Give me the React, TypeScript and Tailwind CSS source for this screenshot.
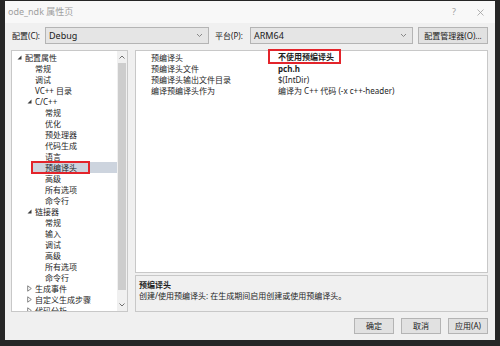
import React from 'react';

type Node = { label: string; level: number; toggle?: 'open' | 'closed'; selected?: boolean };

const tree: Node[] = [
  { label: '配置属性', level: 0, toggle: 'open' },
  { label: '常规', level: 1 },
  { label: '调试', level: 1 },
  { label: 'VC++ 目录', level: 1 },
  { label: 'C/C++', level: 1, toggle: 'open' },
  { label: '常规', level: 2 },
  { label: '优化', level: 2 },
  { label: '预处理器', level: 2 },
  { label: '代码生成', level: 2 },
  { label: '语言', level: 2 },
  { label: '预编译头', level: 2, selected: true },
  { label: '高级', level: 2 },
  { label: '所有选项', level: 2 },
  { label: '命令行', level: 2 },
  { label: '链接器', level: 1, toggle: 'open' },
  { label: '常规', level: 2 },
  { label: '输入', level: 2 },
  { label: '调试', level: 2 },
  { label: '高级', level: 2 },
  { label: '所有选项', level: 2 },
  { label: '命令行', level: 2 },
  { label: '生成事件', level: 1, toggle: 'closed' },
  { label: '自定义生成步骤', level: 1, toggle: 'closed' },
  { label: '代码分析', level: 1, toggle: 'closed' },
];

const props = [
  { name: '预编译头', value: '不使用预编译头', bold: true, boxed: true },
  { name: '预编译头文件', value: 'pch.h', bold: true },
  { name: '预编译头输出文件目录', value: '$(IntDir)' },
  { name: '编译预编译头作为', value: '编译为 C++ 代码 (-x c++-header)' },
];

const Toggle: React.FC<{ kind: 'open' | 'closed' }> = ({ kind }) =>
  kind === 'open' ? (
    <svg width="5" height="5" viewBox="0 0 5 5" className="shrink-0">
      <path d="M4.5 0.5 L4.5 4.5 L0.5 4.5 Z" fill="#3a3a3a" />
    </svg>
  ) : (
    <svg width="5" height="7" viewBox="0 0 5 7" className="shrink-0">
      <path d="M0.7 0.8 L4.3 3.5 L0.7 6.2 Z" fill="none" stroke="#666" strokeWidth="0.8" />
    </svg>
  );

const Chevron: React.FC = () => (
  <svg width="7" height="5" viewBox="0 0 7 5">
    <path d="M1 1 L3.5 3.5 L6 1" fill="none" stroke="#707070" strokeWidth="0.8" />
  </svg>
);

const Select: React.FC<{ value: string; className: string }> = ({ value, className }) => (
  <div className={`h-[17px] bg-[#e5e5e5] border border-[#b4b4b4] flex items-center justify-between pl-[3px] pr-[5px] ${className}`}>
    <span className="text-[9px] text-[#1a1a1a]">{value}</span>
    <Chevron />
  </div>
);

const Btn: React.FC<{ children: React.ReactNode; className?: string }> = ({ children, className = '' }) => (
  <div className={`h-[16px] bg-[#e1e1e1] border border-[#b4b4b4] flex items-center justify-center text-[8px] text-[#1a1a1a] ${className}`}>
    {children}
  </div>
);

export default function App() {
  return (
    <div
      className="w-[500px] h-[346px] bg-[#262626] pt-[1px] pl-[5px] pr-[5px] pb-[6px] overflow-hidden"
      style={{ fontFamily: '"Noto Sans", "Noto Sans CJK SC", sans-serif' }}
    >
      <div className="h-full bg-[#f0f0f0] flex flex-col">
        {/* title bar */}
        <div className="h-[22px] bg-[#f8f8f8] flex items-center justify-between pl-[3px] pr-[11px] shrink-0">
          <span className="text-[9px] text-[#a0a0a0]">ode_ndk 属性页</span>
          <div className="flex items-center gap-[21px]">
            <span className="text-[9px] text-[#a0a0a0]">?</span>
            <svg width="7" height="7" viewBox="0 0 7 7">
              <path d="M0.5 0.5 L6.5 6.5 M6.5 0.5 L0.5 6.5" stroke="#a0a0a0" strokeWidth="0.8" />
            </svg>
          </div>
        </div>

        {/* config row */}
        <div className="flex items-center pl-[7px] pr-[7px] mt-[4px] shrink-0">
          <span className="text-[8px] text-[#1a1a1a] w-[33px]">配置(C):</span>
          <Select value="Debug" className="w-[164px]" />
          <span className="text-[8px] text-[#1a1a1a] ml-[6px] w-[35px]">平台(P):</span>
          <Select value="ARM64" className="w-[163px]" />
          <Btn className="ml-[5px] flex-1 h-[17px]">配置管理器(O)...</Btn>
        </div>

        {/* main */}
        <div className="flex pl-[6px] pr-[7px] mt-[6px] h-[262px] shrink-0">
          {/* tree */}
          <div className="w-[117px] bg-white border border-[#c8c8c8] flex overflow-hidden">
            <div className="flex-1 pt-[1px] overflow-hidden">
              {tree.map((n, i) => (
                <div
                  key={i}
                  className="h-[11px] flex items-center text-[8px] leading-[11px] text-[#1e1e1e] whitespace-nowrap"
                  style={{ paddingLeft: 5 + n.level * 10 }}
                >
                  <span className="w-[8px] flex items-center">{n.toggle && <Toggle kind={n.toggle} />}</span>
                  {n.selected ? (
                    <span className="flex-1 h-[11px] bg-[#cdd4de] -ml-[14px] flex items-center">
                      <span className="border-2 border-[#e3242b] h-[13px] flex items-center pl-[12px] w-[59px]">{n.label}</span>
                    </span>
                  ) : (
                    <span>{n.label}</span>
                  )}
                </div>
              ))}
            </div>
            <div className="w-[10px] bg-[#f0f0f0] flex flex-col items-center">
              <div className="h-[12px] flex items-center justify-center">
                <svg width="6" height="4" viewBox="0 0 6 4">
                  <path d="M0.5 3.5 L3 1 L5.5 3.5" fill="none" stroke="#606060" strokeWidth="0.9" />
                </svg>
              </div>
              <div className="w-[8px] h-[227px] bg-[#cdcdcd]" />
              <div className="flex-1" />
              <div className="h-[12px] flex items-center justify-center">
                <svg width="6" height="4" viewBox="0 0 6 4">
                  <path d="M0.5 0.5 L3 3 L5.5 0.5" fill="none" stroke="#606060" strokeWidth="0.9" />
                </svg>
              </div>
            </div>
          </div>

          {/* right column */}
          <div className="flex-1 ml-[7px] flex flex-col gap-[2px]">
            <div className="h-[223px] bg-white border border-[#c8c8c8] pl-[8px] pt-[1px]">
              {props.map((p, i) => (
                <div key={i} className="h-[11px] flex items-center text-[8px] leading-[11px] text-[#1e1e1e] whitespace-nowrap">
                  <span className="w-[134px] pl-[7px]">{p.name}</span>
                  {p.boxed ? (
                    <span className="border-2 border-[#e3242b] h-[15px] flex items-center pl-[8px] pr-[5px] -ml-[10px] -mt-[3px] font-bold">
                      {p.value}
                    </span>
                  ) : (
                    <span className={p.bold ? 'font-bold' : ''}>{p.value}</span>
                  )}
                </div>
              ))}
            </div>
            <div className="flex-1 bg-[#f0f0f0] border border-[#c8c8c8] pl-[3px] pt-[3px] text-[8px] text-[#1e1e1e] leading-[11px]">
              <div className="font-bold">预编译头</div>
              <div>创建/使用预编译头: 在生成期间启用创建或使用预编译头。</div>
            </div>
          </div>
        </div>

        {/* buttons */}
        <div className="flex justify-end gap-[7px] pr-[7px] mt-[6px]">
          <Btn className="w-[40px]">确定</Btn>
          <Btn className="w-[40px]">取消</Btn>
          <Btn className="w-[40px]">应用(A)</Btn>
        </div>
      </div>
    </div>
  );
}
